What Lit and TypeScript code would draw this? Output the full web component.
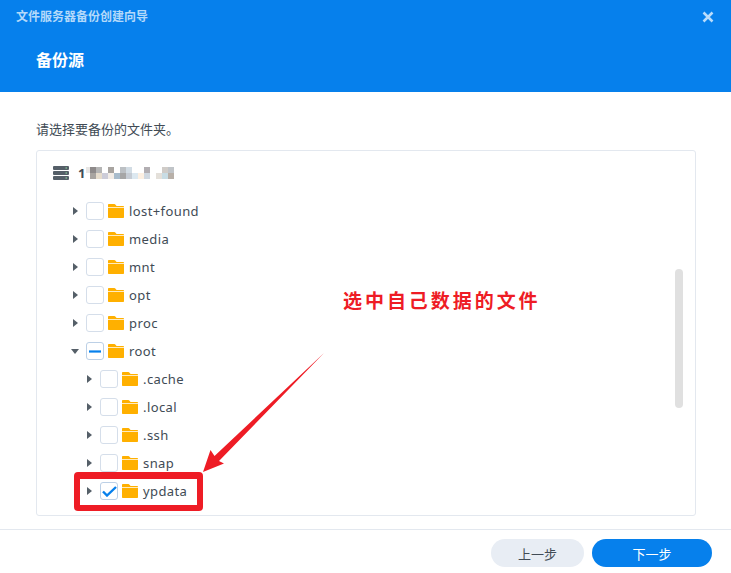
import { LitElement, html, css, svg } from "lit";
import { customElement } from "lit/decorators.js";

const rows = [
  { name: "lost+found", level: 0 },
  { name: "media", level: 0 },
  { name: "mnt", level: 0 },
  { name: "opt", level: 0 },
  { name: "proc", level: 0 },
  { name: "root", level: 0, open: true, state: "partial" },
  { name: ".cache", level: 1 },
  { name: ".local", level: 1 },
  { name: ".ssh", level: 1 },
  { name: "snap", level: 1 },
  { name: "ypdata", level: 1, state: "checked" },
];

const folder = svg`<svg class="folder" width="16" height="16" viewBox="0 0 16 16"><path d="M0 2C0 1.4.4 1 1 1h5.4c.4 0 .7.2.9.5L8.6 3H15c.6 0 1 .4 1 1H0z" fill="#ffb000"/><path d="M0 4.8h16V14c0 .6-.4 1-1 1H1c-.6 0-1-.4-1-1z" fill="#ffb000"/></svg>`;

@customElement("app-root")
export class AppRoot extends LitElement {
  static styles = css`
    :host { display: block; width: 731px; height: 573px; position: relative; overflow: hidden; background: #fff; font-family: "Noto Sans", "Noto Sans CJK SC", sans-serif; color: #414b55; }
    .head { height: 92px; background: #0680ec; box-sizing: border-box; padding: 9px 16px 0; position: relative; }
    .title { font-size: 12px; line-height: 16px; font-weight: 700; color: #b3d9fa; }
    .sub { font-size: 16px; line-height: 22px; font-weight: 700; color: #fff; margin: 24px 0 0 20px; }
    .close { position: absolute; left: 702px; top: 11px; }
    .body { padding: 28px 35px 0 36px; height: 437px; box-sizing: border-box; }
    .prompt { font-size: 13px; line-height: 18px; margin-bottom: 12px; color: #414b55; }
    .panel { height: 366px; box-sizing: border-box; border: 1px solid #e3e8ef; border-radius: 3px; position: relative; padding: 10px 0 0 16px; }
    .host { display: flex; align-items: center; height: 24px; font-weight: 700; font-size: 13px; color: #414b55; }
    .host-icon { margin-right: 9px; flex: none; }
    .num { width: 8px; flex: none; }
    .mosaic { display: grid; grid-template-columns: 4px repeat(14, 6px); grid-auto-rows: 6px; }
    .tree { margin-top: 12px; }
    .row { display: flex; align-items: center; height: 28px; font-size: 13px; letter-spacing: 0.4px; }
    .tri { width: 5px; height: 8px; margin-right: 8px; flex: none; }
    .tri-open { width: 8px; height: 5px; margin: 0 7px 0 -2px; flex: none; }
    .cb { width: 18px; height: 18px; box-sizing: border-box; border: 1px solid #d5deea; border-radius: 3px; flex: none; display: flex; align-items: center; justify-content: center; background: #fff; margin-right: 4px; }
    .on { border-color: #bcd0e6; }
    .folder { flex: none; margin-right: 5px; }
    .thumb { position: absolute; left: 638px; top: 118px; width: 8px; height: 139px; border-radius: 4px; background: #e0e0e0; }
    .foot { height: 43px; border-top: 1px solid #e3e8ef; display: flex; justify-content: flex-end; gap: 8px; padding: 9px 19px 0 0; }
    .btn { height: 28px; border: 0; border-radius: 14px; font: 13px "Noto Sans", "Noto Sans CJK SC", sans-serif; display: flex; align-items: center; justify-content: center; }
    .prev { width: 93px; background: #e8edf4; color: #414b55; }
    .next { width: 120px; background: #0680ec; color: #fff; }
    .note { position: absolute; left: 343px; top: 288px; font-size: 19px; line-height: 26px; font-weight: 700; letter-spacing: 2.95px; color: #ee1c25; white-space: nowrap; }
    .mark { position: absolute; left: 74px; top: 472px; width: 129px; height: 39px; box-sizing: border-box; border: 6px solid #ee1c25; border-top-width: 7px; border-radius: 4px; }
    .shape { position: absolute; left: 0; top: 0; }
  `;

  private tile(c: string) {
    return html`<span style="background:${c}"></span>`;
  }

  render() {
    const top = ["#e8e6e4","#8e8a8a","#b5b5b5","#fff","#a8a4a0","#fff","#bcc0c4","#d2dce4","#fff","#fff","#b2aeb2","#fff","#fff","#d0ccc8","#c0c4c8"];
    const bot = ["#fff","#a8a4a0","#e6dccc","#ccccd8","#f2ece6","#a8bccc","#a6a6a6","#c6ccd4","#dce8f0","#fdf0e2","#d0d8e0","#fff","#e4e0da","#c8dce4","#b8b0a8"];
    return html`
      <div class="head">
        <div class="title">文件服务器备份创建向导</div>
        <div class="sub">备份源</div>
        <svg class="close" width="12" height="12" viewBox="0 0 12 12"><path d="M1.5 1.5l9 9M10.5 1.5l-9 9" stroke="#b9dcfb" stroke-width="2.5" fill="none"/></svg>
      </div>
      <div class="body">
        <div class="prompt">请选择要备份的文件夹。</div>
        <div class="panel">
          <div class="host">
            <svg class="host-icon" width="16" height="14" viewBox="0 0 16 14"><rect y="0" width="16" height="4" rx="1" fill="#555f68"/><rect y="5" width="16" height="4" rx="1" fill="#555f68"/><rect y="10" width="16" height="4" rx="1" fill="#555f68"/><rect x="12.5" y="1.5" width="1.5" height="1" fill="#8fe0a0"/><rect x="12.5" y="6.5" width="1.5" height="1" fill="#8fe0a0"/><rect x="12.5" y="11.5" width="1.5" height="1" fill="#8fe0a0"/></svg>
            <span class="num">1</span>
            <span class="mosaic">${top.map((c) => this.tile(c))}${bot.map((c) => this.tile(c))}</span>
          </div>
          <div class="tree">
            ${rows.map((r) => html`
              <div class="row" style="padding-left:${r.level * 14 + 20}px">
                ${r.open
                  ? html`<svg class="tri-open" viewBox="0 0 8 5"><path d="M0 0h8L4 5z" fill="#555f68"/></svg>`
                  : html`<svg class="tri" viewBox="0 0 5 8"><path d="M0 0l5 4-5 4z" fill="#555f68"/></svg>`}
                <span class="cb ${r.state ? "on" : ""}">
                  ${r.state === "partial" ? html`<svg width="12" height="3"><rect y=".4" width="12" height="2.2" fill="#0680ec"/></svg>` : ""}
                  ${r.state === "checked" ? html`<svg width="15" height="11" viewBox="0 0 15 11"><path d="M1 5.5l4 4L14 1" stroke="#0680ec" stroke-width="2.4" fill="none"/></svg>` : ""}
                </span>
                ${folder}
                <span>${r.name}</span>
              </div>`)}
          </div>
          <div class="thumb"></div>
        </div>
      </div>
      <div class="foot">
        <button class="btn prev">上一步</button>
        <button class="btn next">下一步</button>
      </div>
      <div class="note">选中自己数据的文件</div>
      <div class="mark"></div>
      <svg class="shape" width="731" height="573"><polygon points="324,353 219,461 224,463.5 203,472 210.5,450 214.5,456" fill="#ee1c25"/></svg>
    `;
  }
}
